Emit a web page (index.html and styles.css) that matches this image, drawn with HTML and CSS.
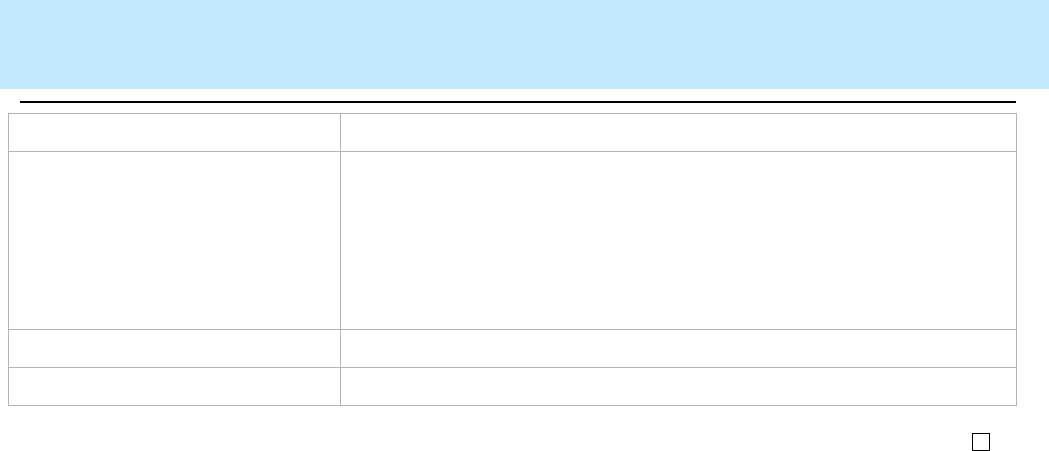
FILE: index.html
```html
<!DOCTYPE html>
<html>
<head>
<meta charset="utf-8">
<link rel="stylesheet" href="styles.css">
</head>
<body>
<header class="banner"></header>
<div class="rule"></div>
<div class="grid">
  <div class="cell c1 r1"></div><div class="cell c2 r1"></div>
  <div class="cell c1 r2"></div><div class="cell c2 r2"></div>
  <div class="cell c1 r3"></div><div class="cell c2 r3"></div>
  <div class="cell c1 r4"></div><div class="cell c2 r4"></div>
</div>
<div class="footer"><span class="box"></span></div>
</body>
</html>
```
FILE: styles.css
```css
html, body { margin: 0; padding: 0; background: #fff; font-family: "Liberation Sans", Arial, sans-serif; }
.banner { height: 89px; background: #c4eaff; }
.rule { margin: 12px 0 0 20px; width: 996px; height: 2px; background: #000; }
.grid {
  margin: 10px 0 0 8px;
  width: 1008px;
  display: grid;
  grid-template-columns: 332px 676px;
  grid-template-rows: 38px 178px 38px 38px;
  border-left: 1px solid #b4b4b4;
  border-top: 1px solid #b4b4b4;
}
.cell { border-right: 1px solid #b4b4b4; border-bottom: 1px solid #b4b4b4; box-sizing: border-box; }
.footer { display: flex; justify-content: flex-end; padding-right: 59px; margin-top: 27px; }
.box { width: 18px; height: 18px; box-sizing: border-box; border: 1px solid #000; display: block; }
```
